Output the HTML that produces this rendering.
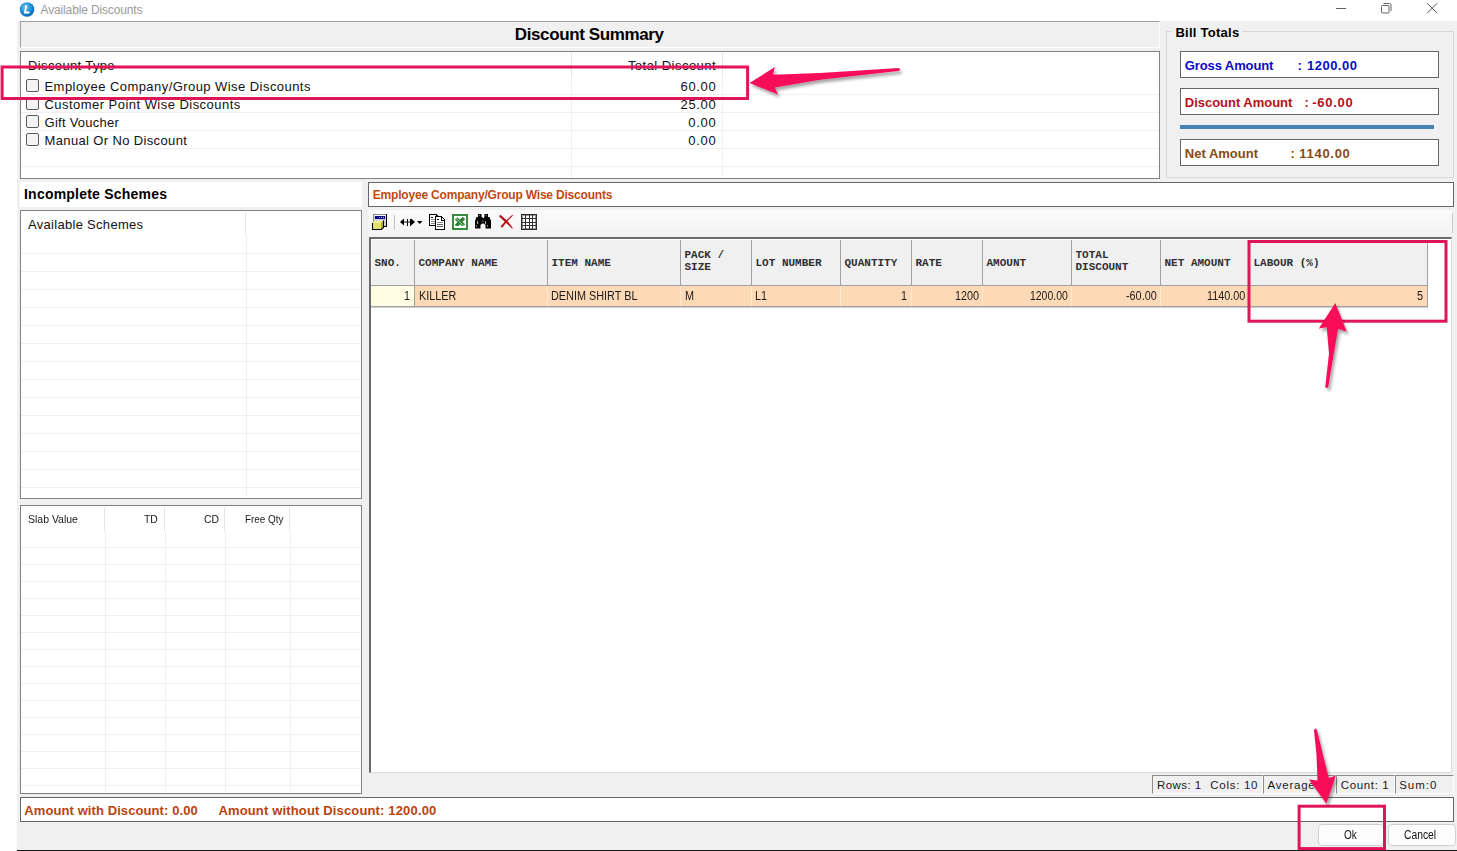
<!DOCTYPE html><html><head><meta charset="utf-8"><style>
html,body{margin:0;padding:0;}
body{width:1457px;height:851px;position:relative;overflow:hidden;background:#fff;font-family:"Liberation Sans",sans-serif;}
.r{position:absolute;box-sizing:border-box;}
.t{position:absolute;white-space:pre;line-height:20px;height:20px;}
</style></head><body>
<div class="r" style="left:17px;top:21px;width:1440px;height:829px;background:#f0f0f0;"></div>
<div class="r" style="left:17px;top:850px;width:1440px;height:1px;background:#1a1a1a;"></div>
<svg class="r" style="left:19px;top:1px" width="17" height="17" viewBox="0 0 17 17">
<defs><radialGradient id="ig" cx="0.4" cy="0.35" r="0.7"><stop offset="0" stop-color="#6cc4f5"/><stop offset="0.6" stop-color="#1a8ad8"/><stop offset="1" stop-color="#0a5fae"/></radialGradient></defs>
<circle cx="8" cy="8.5" r="7.3" fill="url(#ig)"/>
<path d="M6.3 4.2 L8.2 4.2 L7.1 10.6 L10.6 10.6 L10.3 12.4 L4.9 12.4 Z" fill="#fff"/>
</svg>
<div class="t" style="left:40.50px;top:0.04px;font-size:12px;color:#9a9a9a;font-family:'Liberation Sans', sans-serif;font-weight:400;letter-spacing:-0.139px;">Available Discounts</div>
<div class="r" style="left:1336px;top:8px;width:10px;height:1px;background:#606060;"></div>
<svg class="r" style="left:1380px;top:2px" width="13" height="13" viewBox="0 0 13 13" fill="none" stroke="#646464" stroke-width="1">
<rect x="1.5" y="3.5" width="7.5" height="7.5" rx="1"/><path d="M3.5 1.5 H9.5 Q11 1.5 11 3 V9"/></svg>
<svg class="r" style="left:1426px;top:2px" width="13" height="13" viewBox="0 0 13 13" fill="none" stroke="#5a5a5a" stroke-width="1">
<path d="M1.2 1.2 L11.2 11.2 M11.2 1.2 L1.2 11.2"/></svg>
<div class="r" style="left:20px;top:21px;width:1140px;height:27px;background:#f0f0f0;border-top:1px solid #a0a0a0;border-left:1px solid #a0a0a0;border-bottom:1px solid #fff;border-right:1px solid #fff;"></div>
<div class="t" style="left:514.80px;top:25.01px;font-size:17px;color:#000;font-family:'Liberation Sans', sans-serif;font-weight:700;letter-spacing:-0.380px;">Discount Summary</div>
<div class="r" style="left:20px;top:51px;width:1140px;height:128px;background:#fff;border:1px solid #828282;"></div>
<div class="r" style="left:571px;top:53px;width:1px;height:23px;background:#e5e5e5;"></div>
<div class="r" style="left:722px;top:53px;width:1px;height:23px;background:#e5e5e5;"></div>
<div class="r" style="left:21px;top:94px;width:1138px;height:1px;background:#f0f0f0;"></div>
<div class="r" style="left:21px;top:112px;width:1138px;height:1px;background:#f0f0f0;"></div>
<div class="r" style="left:21px;top:130px;width:1138px;height:1px;background:#f0f0f0;"></div>
<div class="r" style="left:21px;top:148px;width:1138px;height:1px;background:#f0f0f0;"></div>
<div class="r" style="left:21px;top:166px;width:1138px;height:1px;background:#f0f0f0;"></div>
<div class="r" style="left:571px;top:76px;width:1px;height:102px;background:#f0f0f0;"></div>
<div class="r" style="left:722px;top:76px;width:1px;height:102px;background:#f0f0f0;"></div>
<div class="t" style="left:28.10px;top:55.59px;font-size:13px;color:#111;font-family:'Liberation Sans', sans-serif;font-weight:400;letter-spacing:0.362px;">Discount Type</div>
<div class="t" style="left:627.90px;top:55.59px;font-size:13px;color:#111;font-family:'Liberation Sans', sans-serif;font-weight:400;letter-spacing:0.465px;">Total Discount</div>
<div class="r" style="left:26px;top:79px;width:13px;height:13px;background:#f4f4f4;border:1px solid #5a5a5a;border-radius:2px;"></div>
<div class="t" style="left:44.50px;top:76.89px;font-size:13px;color:#111;font-family:'Liberation Sans', sans-serif;font-weight:400;letter-spacing:0.442px;">Employee Company/Group Wise Discounts</div>
<div class="t" style="left:680.60px;top:76.89px;font-size:13px;color:#111;font-family:'Liberation Sans', sans-serif;font-weight:400;letter-spacing:0.650px;">60.00</div>
<div class="r" style="left:26px;top:97px;width:13px;height:13px;background:#f4f4f4;border:1px solid #5a5a5a;border-radius:2px;"></div>
<div class="t" style="left:44.50px;top:94.89px;font-size:13px;color:#111;font-family:'Liberation Sans', sans-serif;font-weight:400;letter-spacing:0.462px;">Customer Point Wise Discounts</div>
<div class="t" style="left:680.60px;top:94.89px;font-size:13px;color:#111;font-family:'Liberation Sans', sans-serif;font-weight:400;letter-spacing:0.650px;">25.00</div>
<div class="r" style="left:26px;top:115px;width:13px;height:13px;background:#f4f4f4;border:1px solid #5a5a5a;border-radius:2px;"></div>
<div class="t" style="left:44.50px;top:112.89px;font-size:13px;color:#111;font-family:'Liberation Sans', sans-serif;font-weight:400;letter-spacing:0.264px;">Gift Voucher</div>
<div class="t" style="left:688.30px;top:112.89px;font-size:13px;color:#111;font-family:'Liberation Sans', sans-serif;font-weight:400;letter-spacing:0.717px;">0.00</div>
<div class="r" style="left:26px;top:133px;width:13px;height:13px;background:#f4f4f4;border:1px solid #5a5a5a;border-radius:2px;"></div>
<div class="t" style="left:44.50px;top:130.89px;font-size:13px;color:#111;font-family:'Liberation Sans', sans-serif;font-weight:400;letter-spacing:0.362px;">Manual Or No Discount</div>
<div class="t" style="left:688.30px;top:130.89px;font-size:13px;color:#111;font-family:'Liberation Sans', sans-serif;font-weight:400;letter-spacing:0.717px;">0.00</div>
<div class="r" style="left:1166px;top:31px;width:288px;height:147px;border:1px solid #d8d8d8;"></div>
<div class="r" style="left:1172px;top:26px;width:70px;height:12px;background:#f0f0f0;"></div>
<div class="t" style="left:1175.40px;top:23.09px;font-size:13px;color:#000;font-family:'Liberation Sans', sans-serif;font-weight:700;letter-spacing:0.265px;">Bill Totals</div>
<div class="r" style="left:1180px;top:51px;width:259px;height:27px;background:#fff;border:1px solid #666;"></div>
<div class="t" style="left:1184.80px;top:55.99px;font-size:13px;color:#0a0ac8;font-family:'Liberation Sans', sans-serif;font-weight:700;letter-spacing:-0.105px;">Gross Amount</div>
<div class="t" style="left:1297.60px;top:55.99px;font-size:13px;color:#0a0ac8;font-family:'Liberation Sans', sans-serif;font-weight:700;">:</div>
<div class="t" style="left:1307.00px;top:55.99px;font-size:13px;color:#0a0ac8;font-family:'Liberation Sans', sans-serif;font-weight:700;letter-spacing:0.483px;">1200.00</div>
<div class="r" style="left:1180px;top:88px;width:259px;height:27px;background:#fff;border:1px solid #666;"></div>
<div class="t" style="left:1184.80px;top:92.99px;font-size:13px;color:#b4101c;font-family:'Liberation Sans', sans-serif;font-weight:700;letter-spacing:-0.025px;">Discount Amount</div>
<div class="t" style="left:1304.60px;top:92.99px;font-size:13px;color:#b4101c;font-family:'Liberation Sans', sans-serif;font-weight:700;">:</div>
<div class="t" style="left:1312.20px;top:92.99px;font-size:13px;color:#b4101c;font-family:'Liberation Sans', sans-serif;font-weight:700;letter-spacing:0.730px;">-60.00</div>
<div class="r" style="left:1180px;top:139px;width:259px;height:27px;background:#fff;border:1px solid #666;"></div>
<div class="t" style="left:1184.80px;top:143.99px;font-size:13px;color:#8b4a10;font-family:'Liberation Sans', sans-serif;font-weight:700;letter-spacing:0.006px;">Net Amount</div>
<div class="t" style="left:1290.50px;top:143.99px;font-size:13px;color:#8b4a10;font-family:'Liberation Sans', sans-serif;font-weight:700;">:</div>
<div class="t" style="left:1299.30px;top:143.99px;font-size:13px;color:#8b4a10;font-family:'Liberation Sans', sans-serif;font-weight:700;letter-spacing:0.708px;">1140.00</div>
<div class="r" style="left:1180px;top:125px;width:254px;height:4px;background:#4682b4;"></div>
<div class="r" style="left:20px;top:182px;width:342px;height:25px;background:#fff;"></div>
<div class="t" style="left:24.00px;top:184.35px;font-size:14px;color:#000;font-family:'Liberation Sans', sans-serif;font-weight:700;letter-spacing:0.221px;">Incomplete Schemes</div>
<div class="r" style="left:20px;top:210px;width:342px;height:289px;background:#fff;border:1px solid #828282;"></div>
<div class="r" style="left:245px;top:212px;width:1px;height:23px;background:#e5e5e5;"></div>
<div class="t" style="left:28.00px;top:214.99px;font-size:13px;color:#111;font-family:'Liberation Sans', sans-serif;font-weight:400;letter-spacing:0.297px;">Available Schemes</div>
<div class="r" style="left:21px;top:253px;width:339px;height:1px;background:#f0f0f0;"></div>
<div class="r" style="left:21px;top:271px;width:339px;height:1px;background:#f0f0f0;"></div>
<div class="r" style="left:21px;top:289px;width:339px;height:1px;background:#f0f0f0;"></div>
<div class="r" style="left:21px;top:307px;width:339px;height:1px;background:#f0f0f0;"></div>
<div class="r" style="left:21px;top:325px;width:339px;height:1px;background:#f0f0f0;"></div>
<div class="r" style="left:21px;top:343px;width:339px;height:1px;background:#f0f0f0;"></div>
<div class="r" style="left:21px;top:361px;width:339px;height:1px;background:#f0f0f0;"></div>
<div class="r" style="left:21px;top:379px;width:339px;height:1px;background:#f0f0f0;"></div>
<div class="r" style="left:21px;top:397px;width:339px;height:1px;background:#f0f0f0;"></div>
<div class="r" style="left:21px;top:415px;width:339px;height:1px;background:#f0f0f0;"></div>
<div class="r" style="left:21px;top:433px;width:339px;height:1px;background:#f0f0f0;"></div>
<div class="r" style="left:21px;top:451px;width:339px;height:1px;background:#f0f0f0;"></div>
<div class="r" style="left:21px;top:469px;width:339px;height:1px;background:#f0f0f0;"></div>
<div class="r" style="left:21px;top:487px;width:339px;height:1px;background:#f0f0f0;"></div>
<div class="r" style="left:246px;top:235px;width:1px;height:262px;background:#f0f0f0;"></div>
<div class="r" style="left:20px;top:505px;width:342px;height:289px;background:#fff;border:1px solid #828282;"></div>
<div class="r" style="left:104px;top:507px;width:1px;height:24px;background:#e5e5e5;"></div>
<div class="r" style="left:164px;top:507px;width:1px;height:24px;background:#e5e5e5;"></div>
<div class="r" style="left:224px;top:507px;width:1px;height:24px;background:#e5e5e5;"></div>
<div class="r" style="left:289px;top:507px;width:1px;height:24px;background:#e5e5e5;"></div>
<div class="r" style="left:21px;top:547px;width:339px;height:1px;background:#f0f0f0;"></div>
<div class="r" style="left:21px;top:564px;width:339px;height:1px;background:#f0f0f0;"></div>
<div class="r" style="left:21px;top:581px;width:339px;height:1px;background:#f0f0f0;"></div>
<div class="r" style="left:21px;top:598px;width:339px;height:1px;background:#f0f0f0;"></div>
<div class="r" style="left:21px;top:615px;width:339px;height:1px;background:#f0f0f0;"></div>
<div class="r" style="left:21px;top:632px;width:339px;height:1px;background:#f0f0f0;"></div>
<div class="r" style="left:21px;top:649px;width:339px;height:1px;background:#f0f0f0;"></div>
<div class="r" style="left:21px;top:666px;width:339px;height:1px;background:#f0f0f0;"></div>
<div class="r" style="left:21px;top:683px;width:339px;height:1px;background:#f0f0f0;"></div>
<div class="r" style="left:21px;top:700px;width:339px;height:1px;background:#f0f0f0;"></div>
<div class="r" style="left:21px;top:717px;width:339px;height:1px;background:#f0f0f0;"></div>
<div class="r" style="left:21px;top:734px;width:339px;height:1px;background:#f0f0f0;"></div>
<div class="r" style="left:21px;top:751px;width:339px;height:1px;background:#f0f0f0;"></div>
<div class="r" style="left:21px;top:768px;width:339px;height:1px;background:#f0f0f0;"></div>
<div class="r" style="left:21px;top:785px;width:339px;height:1px;background:#f0f0f0;"></div>
<div class="r" style="left:105px;top:531px;width:1px;height:261px;background:#f0f0f0;"></div>
<div class="r" style="left:165px;top:531px;width:1px;height:261px;background:#f0f0f0;"></div>
<div class="r" style="left:225px;top:531px;width:1px;height:261px;background:#f0f0f0;"></div>
<div class="r" style="left:290px;top:531px;width:1px;height:261px;background:#f0f0f0;"></div>
<div class="t" style="left:28.40px;top:509.21px;font-size:11.8px;color:#1a1a1a;font-family:'Liberation Sans', sans-serif;font-weight:400;transform:scaleX(0.8889);transform-origin:0 0;">Slab Value</div>
<div class="t" style="left:144.44px;top:509.21px;font-size:11.8px;color:#1a1a1a;font-family:'Liberation Sans', sans-serif;font-weight:400;transform:scaleX(0.8800);transform-origin:0 0;">TD</div>
<div class="t" style="left:203.54px;top:509.21px;font-size:11.8px;color:#1a1a1a;font-family:'Liberation Sans', sans-serif;font-weight:400;transform:scaleX(0.8800);transform-origin:0 0;">CD</div>
<div class="t" style="left:244.80px;top:509.21px;font-size:11.8px;color:#1a1a1a;font-family:'Liberation Sans', sans-serif;font-weight:400;transform:scaleX(0.8391);transform-origin:0 0;">Free Qty</div>
<div class="r" style="left:368px;top:182px;width:1086px;height:25px;background:#fff;border:1px solid #666;"></div>
<div class="t" style="left:372.80px;top:185.04px;font-size:12px;color:#c04a10;font-family:'Liberation Sans', sans-serif;font-weight:700;letter-spacing:-0.193px;">Employee Company/Group Wise Discounts</div>
<div class="r" style="left:368px;top:210px;width:1085px;height:26px;background:linear-gradient(#fbfbfb,#f3f3f3);border-top-right-radius:3px;"></div>
<div class="r" style="left:1452px;top:213px;width:1px;height:20px;background:#c8c8c8;"></div>
<svg class="r" style="left:368px;top:210px" width="180" height="26" viewBox="368 210 180 26" shape-rendering="crispEdges">
<!-- icon1 form -->
<rect x="373" y="214" width="14" height="13" fill="#d6d6d6"/>
<rect x="374" y="215" width="12" height="1" fill="#f4f4f4"/>
<path d="M373.5 226.5 V214.5 H386.5" fill="none" stroke="#8c8c8c" stroke-width="1"/>
<path d="M386.5 214 V226.5 H373" fill="none" stroke="#000" stroke-width="1"/>
<rect x="375" y="216" width="10" height="3" fill="#000080"/>
<rect x="379" y="217" width="1" height="1" fill="#c0c0ff"/><rect x="381" y="217" width="1" height="1" fill="#c0c0ff"/><rect x="383" y="217" width="1" height="1" fill="#c0c0ff"/>
<path d="M373 222.5 L375 221 H383 V227 L381 229 H373 Z" fill="#e2df6e" shape-rendering="auto"/>
<path d="M373 222.5 L375 221 H383 L381 222.5 Z" fill="#f4f29c" shape-rendering="auto"/>
<path d="M381 222.5 L383 221 V227 L381 229 Z" fill="#b3ae32" shape-rendering="auto"/>
<path d="M372.5 223 V229.5 H381.5 L383.5 227.5 V220.5" fill="none" stroke="#000" stroke-width="1.1" shape-rendering="auto"/>
<!-- separator -->
<rect x="394" y="215" width="1" height="15" fill="#c4c4c4"/>
<!-- resize arrows -->
<rect x="403" y="221" width="8" height="2" fill="#8a8a8a"/>
<path d="M400 222 L404 218.5 V225.5 Z" fill="#000" shape-rendering="auto"/>
<path d="M415 222 L411 218.5 V225.5 Z" fill="#000" shape-rendering="auto"/>
<rect x="407" y="219" width="1" height="7" fill="#000"/>
<rect x="410" y="219" width="1" height="7" fill="#000"/>
<path d="M417 221 H422.5 L419.75 224 Z" fill="#000" shape-rendering="auto"/>
<!-- copy -->
<path d="M429.5 214.5 H436 L437.5 216 V225.5 H429.5 Z" fill="#fff" stroke="#000" stroke-width="1.2"/>
<rect x="431" y="217" width="2" height="1" fill="#000"/>
<rect x="431" y="219" width="4" height="1" fill="#888"/><rect x="431" y="221" width="4" height="1" fill="#888"/><rect x="431" y="223" width="4" height="1" fill="#888"/>
<path d="M435.5 216.5 H441.5 L444.5 219.5 V229.5 H435.5 Z" fill="#fff" stroke="#000" stroke-width="1.2"/>
<path d="M441 216.5 V220 H444.5" fill="none" stroke="#000" stroke-width="1"/>
<rect x="437" y="219" width="2" height="1" fill="#000"/>
<rect x="437" y="222" width="6" height="1" fill="#888"/><rect x="437" y="224" width="6" height="1" fill="#666"/><rect x="437" y="226" width="6" height="1" fill="#555"/>
<!-- excel -->
<rect x="453" y="215" width="14" height="14" fill="#fff" stroke="#3a8a40" stroke-width="2.2"/>
<path d="M456 218.5 L464 225.5 M464 218 L456 226" stroke="#2e8236" stroke-width="3.6" shape-rendering="auto"/>
<path d="M455.5 218 L464.5 226.5" stroke="#c8ecc8" stroke-width="0.8" shape-rendering="auto"/>
<rect x="455" y="226" width="10" height="1.5" fill="#fff"/>
<!-- binoculars -->
<g shape-rendering="auto">
<rect x="478" y="214" width="3.5" height="3.2" fill="#000"/>
<rect x="484.5" y="214" width="3.5" height="3.2" fill="#000"/>
<path d="M476.5 217 H482.5 V223 L480.5 225 V228.5 H475 V221 Z" fill="#000"/>
<path d="M484 217 H489.5 L491 221 V228.5 H485.5 V225 L484 223.5 Z" fill="#000"/>
<rect x="482" y="218" width="2.5" height="5.5" fill="#000"/>
<ellipse cx="477.6" cy="222.5" rx="0.6" ry="1.6" fill="#d0d0d0"/>
<ellipse cx="476.6" cy="226" rx="0.5" ry="1" fill="#b0b0b0"/>
<ellipse cx="485.6" cy="222.5" rx="0.6" ry="1.6" fill="#c0c0c0"/>
<ellipse cx="487.6" cy="226" rx="0.5" ry="1" fill="#b0b0b0"/>
<circle cx="482.8" cy="221.3" r="0.7" fill="#8a8a8a"/>
<circle cx="479.6" cy="215.6" r="0.6" fill="#9a9a9a"/>
<circle cx="486.2" cy="215.6" r="0.6" fill="#9a9a9a"/>
</g>
<!-- red x -->
<g shape-rendering="auto" fill="#b80a14">
<path d="M499 216.2 L500.4 214.8 L507.5 221 L511 225.5 L512.8 228.3 L512.2 228.8 L509.5 226 L505.5 222.5 Z"/>
<path d="M512.3 214.8 L513 215.5 L507 221.5 L502.2 227.8 L500.6 226.6 L505 221.5 Z"/>
</g>
<!-- grid -->
<rect x="521" y="214" width="16" height="16" fill="#fff"/>
<rect x="521.5" y="214.5" width="15" height="15" fill="none" stroke="#2a2a2a" stroke-width="1"/>
<rect x="522" y="215" width="14" height="1" fill="#9a9a9a"/><rect x="522" y="228" width="14" height="1" fill="#9a9a9a"/>
<rect x="522" y="215" width="1" height="14" fill="#9a9a9a"/><rect x="535" y="215" width="1" height="14" fill="#9a9a9a"/>
<rect x="525" y="214" width="1" height="16" fill="#333"/>
<rect x="529" y="214" width="1" height="16" fill="#333"/>
<rect x="532" y="214" width="1" height="16" fill="#333"/>
<rect x="521" y="218" width="16" height="1" fill="#333"/>
<rect x="521" y="222" width="16" height="1" fill="#333"/>
<rect x="521" y="225" width="16" height="1" fill="#333"/>
</svg>
<div class="r" style="left:369px;top:237px;width:1083px;height:536px;background:#fff;border-top:2px solid #6b6b6b;border-left:2px solid #6b6b6b;border-right:1px solid #dadada;border-bottom:1px solid #dadada;"></div>
<div class="r" style="left:372px;top:240px;width:1055px;height:45px;background:#f0f0f0;"></div>
<div class="r" style="left:371px;top:285px;width:1056px;height:1px;background:#a0a0a0;"></div>
<div class="r" style="left:414px;top:240px;width:1px;height:46px;background:#a0a0a0;"></div>
<div class="r" style="left:547px;top:240px;width:1px;height:46px;background:#a0a0a0;"></div>
<div class="r" style="left:680px;top:240px;width:1px;height:46px;background:#a0a0a0;"></div>
<div class="r" style="left:751px;top:240px;width:1px;height:46px;background:#a0a0a0;"></div>
<div class="r" style="left:840px;top:240px;width:1px;height:46px;background:#a0a0a0;"></div>
<div class="r" style="left:911px;top:240px;width:1px;height:46px;background:#a0a0a0;"></div>
<div class="r" style="left:982px;top:240px;width:1px;height:46px;background:#a0a0a0;"></div>
<div class="r" style="left:1071px;top:240px;width:1px;height:46px;background:#a0a0a0;"></div>
<div class="r" style="left:1160px;top:240px;width:1px;height:46px;background:#a0a0a0;"></div>
<div class="r" style="left:1249px;top:240px;width:1px;height:46px;background:#a0a0a0;"></div>
<div class="r" style="left:1427px;top:240px;width:1px;height:46px;background:#a0a0a0;"></div>
<div class="r" style="left:371px;top:286px;width:43px;height:20px;background:#fffde2;"></div>
<div class="r" style="left:415px;top:286px;width:1012px;height:20px;background:#fdd9b5;"></div>
<div class="r" style="left:414px;top:286px;width:1px;height:20px;background:#a0a0a0;"></div>
<div class="r" style="left:547px;top:286px;width:1px;height:20px;background:#fde9d6;"></div>
<div class="r" style="left:680px;top:286px;width:1px;height:20px;background:#fde9d6;"></div>
<div class="r" style="left:751px;top:286px;width:1px;height:20px;background:#fde9d6;"></div>
<div class="r" style="left:840px;top:286px;width:1px;height:20px;background:#fde9d6;"></div>
<div class="r" style="left:911px;top:286px;width:1px;height:20px;background:#fde9d6;"></div>
<div class="r" style="left:982px;top:286px;width:1px;height:20px;background:#fde9d6;"></div>
<div class="r" style="left:1071px;top:286px;width:1px;height:20px;background:#fde9d6;"></div>
<div class="r" style="left:1160px;top:286px;width:1px;height:20px;background:#fde9d6;"></div>
<div class="r" style="left:1249px;top:286px;width:1px;height:20px;background:#fde9d6;"></div>
<div class="r" style="left:371px;top:306px;width:1057px;height:1px;background:#a0a0a0;"></div>
<div class="r" style="left:371px;top:307px;width:1057px;height:1px;background:#d0d0d0;"></div>
<div class="r" style="left:1427px;top:286px;width:1px;height:21px;background:#a0a0a0;"></div>
<div class="t" style="left:374.50px;top:253.37px;font-size:11px;color:#303030;font-family:'Liberation Mono', monospace;font-weight:700;">SNO.</div>
<div class="t" style="left:418.50px;top:253.37px;font-size:11px;color:#303030;font-family:'Liberation Mono', monospace;font-weight:700;">COMPANY NAME</div>
<div class="t" style="left:551.50px;top:253.37px;font-size:11px;color:#303030;font-family:'Liberation Mono', monospace;font-weight:700;">ITEM NAME</div>
<div class="t" style="left:684.50px;top:245.37px;font-size:11px;color:#303030;font-family:'Liberation Mono', monospace;font-weight:700;">PACK /</div>
<div class="t" style="left:684.50px;top:257.37px;font-size:11px;color:#303030;font-family:'Liberation Mono', monospace;font-weight:700;">SIZE</div>
<div class="t" style="left:755.50px;top:253.37px;font-size:11px;color:#303030;font-family:'Liberation Mono', monospace;font-weight:700;">LOT NUMBER</div>
<div class="t" style="left:844.50px;top:253.37px;font-size:11px;color:#303030;font-family:'Liberation Mono', monospace;font-weight:700;">QUANTITY</div>
<div class="t" style="left:915.50px;top:253.37px;font-size:11px;color:#303030;font-family:'Liberation Mono', monospace;font-weight:700;">RATE</div>
<div class="t" style="left:986.50px;top:253.37px;font-size:11px;color:#303030;font-family:'Liberation Mono', monospace;font-weight:700;">AMOUNT</div>
<div class="t" style="left:1075.50px;top:245.37px;font-size:11px;color:#303030;font-family:'Liberation Mono', monospace;font-weight:700;">TOTAL</div>
<div class="t" style="left:1075.50px;top:257.37px;font-size:11px;color:#303030;font-family:'Liberation Mono', monospace;font-weight:700;">DISCOUNT</div>
<div class="t" style="left:1164.50px;top:253.37px;font-size:11px;color:#303030;font-family:'Liberation Mono', monospace;font-weight:700;">NET AMOUNT</div>
<div class="t" style="left:1253.50px;top:253.37px;font-size:11px;color:#303030;font-family:'Liberation Mono', monospace;font-weight:700;">LABOUR (%)</div>
<div class="t" style="left:403.96px;top:285.94px;font-size:12.3px;color:#1a1a1a;font-family:'Liberation Sans', sans-serif;font-weight:400;transform:scaleX(0.8800);transform-origin:0 0;">1</div>
<div class="t" style="left:418.80px;top:285.94px;font-size:12.3px;color:#1a1a1a;font-family:'Liberation Sans', sans-serif;font-weight:400;transform:scaleX(0.8800);transform-origin:0 0;">KILLER</div>
<div class="t" style="left:551.40px;top:285.94px;font-size:12.3px;color:#1a1a1a;font-family:'Liberation Sans', sans-serif;font-weight:400;transform:scaleX(0.8827);transform-origin:0 0;">DENIM SHIRT BL</div>
<div class="t" style="left:684.50px;top:285.94px;font-size:12.3px;color:#1a1a1a;font-family:'Liberation Sans', sans-serif;font-weight:400;transform:scaleX(0.8800);transform-origin:0 0;">M</div>
<div class="t" style="left:755.00px;top:285.94px;font-size:12.3px;color:#1a1a1a;font-family:'Liberation Sans', sans-serif;font-weight:400;transform:scaleX(0.8800);transform-origin:0 0;">L1</div>
<div class="t" style="left:901.06px;top:285.94px;font-size:12.3px;color:#1a1a1a;font-family:'Liberation Sans', sans-serif;font-weight:400;transform:scaleX(0.8800);transform-origin:0 0;">1</div>
<div class="t" style="left:955.12px;top:285.94px;font-size:12.3px;color:#1a1a1a;font-family:'Liberation Sans', sans-serif;font-weight:400;transform:scaleX(0.8800);transform-origin:0 0;">1200</div>
<div class="t" style="left:1030.20px;top:285.94px;font-size:12.3px;color:#1a1a1a;font-family:'Liberation Sans', sans-serif;font-weight:400;transform:scaleX(0.8494);transform-origin:0 0;">1200.00</div>
<div class="t" style="left:1125.82px;top:285.94px;font-size:12.3px;color:#1a1a1a;font-family:'Liberation Sans', sans-serif;font-weight:400;transform:scaleX(0.8800);transform-origin:0 0;">-60.00</div>
<div class="t" style="left:1207.02px;top:285.94px;font-size:12.3px;color:#1a1a1a;font-family:'Liberation Sans', sans-serif;font-weight:400;transform:scaleX(0.8800);transform-origin:0 0;">1140.00</div>
<div class="t" style="left:1417.06px;top:285.94px;font-size:12.3px;color:#1a1a1a;font-family:'Liberation Sans', sans-serif;font-weight:400;transform:scaleX(0.8800);transform-origin:0 0;">5</div>
<div class="r" style="left:1152px;top:775px;width:111px;height:19px;border-top:1px solid #8c8c8c;border-left:1px solid #8c8c8c;border-right:1px solid #fff;border-bottom:1px solid #fff;"></div>
<div class="r" style="left:1263px;top:775px;width:73px;height:19px;border-top:1px solid #8c8c8c;border-left:1px solid #8c8c8c;border-right:1px solid #fff;border-bottom:1px solid #fff;"></div>
<div class="r" style="left:1336px;top:775px;width:59px;height:19px;border-top:1px solid #8c8c8c;border-left:1px solid #8c8c8c;border-right:1px solid #fff;border-bottom:1px solid #fff;"></div>
<div class="r" style="left:1395px;top:775px;width:59px;height:19px;border-top:1px solid #8c8c8c;border-left:1px solid #8c8c8c;border-right:1px solid #fff;border-bottom:1px solid #fff;"></div>
<div class="t" style="left:1157.00px;top:775.41px;font-size:11.5px;color:#1a1a1a;font-family:'Liberation Sans', sans-serif;font-weight:400;letter-spacing:0.417px;">Rows: 1</div>
<div class="t" style="left:1210.30px;top:775.41px;font-size:11.5px;color:#1a1a1a;font-family:'Liberation Sans', sans-serif;font-weight:400;letter-spacing:0.707px;">Cols: 10</div>
<div class="t" style="left:1267.50px;top:775.41px;font-size:11.5px;color:#1a1a1a;font-family:'Liberation Sans', sans-serif;font-weight:400;letter-spacing:0.767px;">Average</div>
<div class="t" style="left:1340.70px;top:775.41px;font-size:11.5px;color:#1a1a1a;font-family:'Liberation Sans', sans-serif;font-weight:400;letter-spacing:0.657px;">Count: 1</div>
<div class="t" style="left:1399.20px;top:775.41px;font-size:11.5px;color:#1a1a1a;font-family:'Liberation Sans', sans-serif;font-weight:400;letter-spacing:0.988px;">Sum:0</div>
<div class="r" style="left:20px;top:797px;width:1434px;height:25px;background:#fff;border:1px solid #666;"></div>
<div class="t" style="left:24.30px;top:800.69px;font-size:13px;color:#b8440e;font-family:'Liberation Sans', sans-serif;font-weight:700;letter-spacing:0.090px;">Amount with Discount: 0.00</div>
<div class="t" style="left:218.40px;top:800.69px;font-size:13px;color:#b8440e;font-family:'Liberation Sans', sans-serif;font-weight:700;letter-spacing:0.155px;">Amount without Discount: 1200.00</div>
<div class="r" style="left:1318px;top:824px;width:66px;height:22px;background:#fdfdfd;border:1px solid #d0d0d0;border-radius:4px;"></div>
<div class="r" style="left:1388px;top:824px;width:68px;height:22px;background:#fdfdfd;border:1px solid #d0d0d0;border-radius:4px;"></div>
<div class="t" style="left:1343.80px;top:824.77px;font-size:12.5px;color:#111;font-family:'Liberation Sans', sans-serif;font-weight:400;transform:scaleX(0.8000);transform-origin:0 0;">Ok</div>
<div class="t" style="left:1403.90px;top:824.77px;font-size:12.5px;color:#111;font-family:'Liberation Sans', sans-serif;font-weight:400;transform:scaleX(0.8256);transform-origin:0 0;">Cancel</div>
<svg class="r" style="left:0;top:0" width="1457" height="851" viewBox="0 0 1457 851" fill="none" stroke="#e01558" stroke-width="3">
<rect x="2.1" y="67" width="745.5" height="31.5"/>
<rect x="1249" y="241.5" width="197" height="79.7"/>
<rect x="1299.1" y="806.2" width="85.4" height="42.4"/>
</svg>
<svg class="r" style="left:0;top:0" width="1457" height="851" viewBox="0 0 1457 851">
<defs><filter id="sh" x="-20%" y="-20%" width="140%" height="140%"><feGaussianBlur in="SourceAlpha" stdDeviation="1.6"/><feOffset dx="1.5" dy="2.5" result="b"/><feComponentTransfer><feFuncA type="linear" slope="0.35"/></feComponentTransfer><feMerge><feMergeNode/><feMergeNode in="SourceGraphic"/></feMerge></filter></defs>
<g fill="#f80f5a" filter="url(#sh)">
<path d="M749.4 83.1 L774.9 67.1 L773 74.8 L820 72.9 L898.8 68 Q901.2 69.5 898.8 71 L820 79.7 L774.9 87.5 L778 94.6 Z"/>
<path d="M1335.3 303 L1346.7 331.4 L1338.1 329 L1333.8 353.7 L1328.3 387 Q1326.7 389.2 1325.2 387 L1329 353.7 L1326.7 327.3 L1318.8 328.5 Z"/>
<path d="M1326.4 803.8 L1309 779.4 L1317.5 780.4 L1316.5 755 L1314 730 Q1315.5 727 1317 730 L1323 755 L1328.9 777.9 L1335.9 775.4 Z"/>
</g></svg>
</body></html>
